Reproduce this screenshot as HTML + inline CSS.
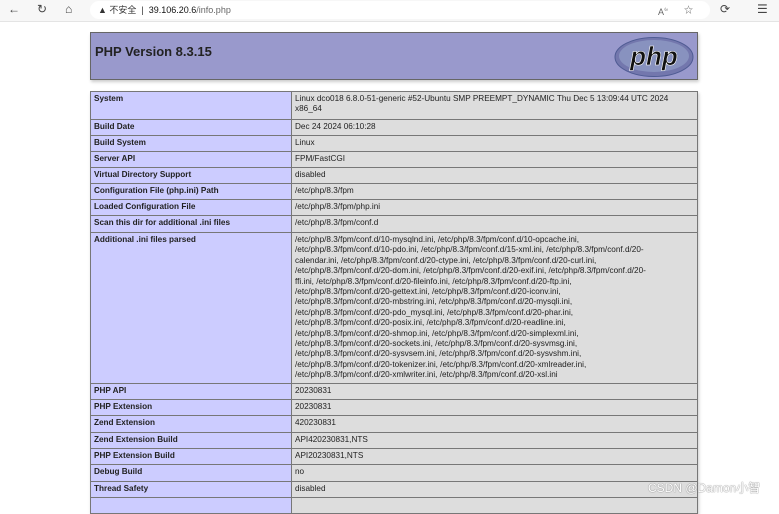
<!DOCTYPE html>
<html><head><meta charset="utf-8"><style>
body{margin:0;width:779px;height:500px;overflow:hidden;background:#fff;font-family:"Liberation Sans","Noto Sans CJK SC",sans-serif;position:relative}
.bar{position:absolute;left:0;top:0;width:779px;height:21px;background:#f7f7f7;border-bottom:1px solid #e4e4e4}
.url{position:absolute;left:90px;top:1px;width:620px;height:18px;background:#fff;border-radius:10px;font-size:9px;line-height:18px;color:#333}
.ic{position:absolute;top:2px;font-size:12px;color:#444}
.hd{position:absolute;left:90px;top:32px;width:606px;height:46px;background:#9999cc;border:1px solid #666;box-shadow:1px 2px 3px #ccc}
.hd h1{margin:0;position:absolute;left:4px;top:11px;font-size:13px;font-weight:bold;color:#222}
table{position:absolute;left:90px;top:91px;width:608px;border-collapse:collapse;box-shadow:1px 2px 3px #ccc}
td{border:1px solid #777;font-size:8.2px;line-height:10.4px;padding:2px 3px 2px 3px;vertical-align:top;color:#222}
td.e{background:#ccccff;font-weight:bold;width:194px}
td.v{background:#dddddd}
tr{height:16px}
.wm{position:absolute;left:648px;top:479px;font-size:12px;color:#fff;text-shadow:0 0 1px #888,0 0 1px #888}
</style></head><body>
<div class="bar">
<span class="ic" style="left:8px">←</span><span class="ic" style="left:37px">↻</span><span class="ic" style="left:65px">⌂</span>
<div class="url"><span style="margin-left:8px">▲ 不安全 &nbsp;|&nbsp; <b style="font-weight:normal;color:#111">39.106.20.6</b><span style="color:#666">/info.php</span></span>
<span style="position:absolute;left:568px;color:#666">A<sup style="font-size:6px">৬</sup></span><span style="position:absolute;left:594px;color:#666">☆</span></div>
<span class="ic" style="left:720px">⟳</span><span class="ic" style="left:757px">☰</span>
</div>
<div class="hd"><h1>PHP Version 8.3.15</h1>
<svg style="position:absolute;left:523px;top:4px" width="80" height="40"><ellipse cx="40" cy="20" rx="39" ry="19.5" fill="#7377ad" stroke="#4f5b93" stroke-width="1"/><ellipse cx="40" cy="19" rx="35" ry="16" fill="#8892bf"/><text x="40" y="28" text-anchor="middle" font-family="Liberation Sans" font-style="italic" font-weight="bold" font-size="26" fill="#111" stroke="#fff" stroke-width="0.6">php</text></svg>
</div>
<table>
<tr style="height:28px"><td class="e">System</td><td class="v">Linux dco018 6.8.0-51-generic #52-Ubuntu SMP PREEMPT_DYNAMIC Thu Dec 5 13:09:44 UTC 2024<br>x86_64</td></tr>
<tr><td class="e">Build Date</td><td class="v">Dec 24 2024 06:10:28</td></tr>
<tr><td class="e">Build System</td><td class="v">Linux</td></tr>
<tr><td class="e">Server API</td><td class="v">FPM/FastCGI</td></tr>
<tr><td class="e">Virtual Directory Support</td><td class="v">disabled</td></tr>
<tr><td class="e">Configuration File (php.ini) Path</td><td class="v">/etc/php/8.3/fpm</td></tr>
<tr><td class="e">Loaded Configuration File</td><td class="v">/etc/php/8.3/fpm/php.ini</td></tr>
<tr style="height:17px"><td class="e">Scan this dir for additional .ini files</td><td class="v">/etc/php/8.3/fpm/conf.d</td></tr>
<tr style="height:151px"><td class="e">Additional .ini files parsed</td><td class="v">/etc/php/8.3/fpm/conf.d/10-mysqlnd.ini, /etc/php/8.3/fpm/conf.d/10-opcache.ini,<br>/etc/php/8.3/fpm/conf.d/10-pdo.ini, /etc/php/8.3/fpm/conf.d/15-xml.ini, /etc/php/8.3/fpm/conf.d/20-<br>calendar.ini, /etc/php/8.3/fpm/conf.d/20-ctype.ini, /etc/php/8.3/fpm/conf.d/20-curl.ini,<br>/etc/php/8.3/fpm/conf.d/20-dom.ini, /etc/php/8.3/fpm/conf.d/20-exif.ini, /etc/php/8.3/fpm/conf.d/20-<br>ffi.ini, /etc/php/8.3/fpm/conf.d/20-fileinfo.ini, /etc/php/8.3/fpm/conf.d/20-ftp.ini,<br>/etc/php/8.3/fpm/conf.d/20-gettext.ini, /etc/php/8.3/fpm/conf.d/20-iconv.ini,<br>/etc/php/8.3/fpm/conf.d/20-mbstring.ini, /etc/php/8.3/fpm/conf.d/20-mysqli.ini,<br>/etc/php/8.3/fpm/conf.d/20-pdo_mysql.ini, /etc/php/8.3/fpm/conf.d/20-phar.ini,<br>/etc/php/8.3/fpm/conf.d/20-posix.ini, /etc/php/8.3/fpm/conf.d/20-readline.ini,<br>/etc/php/8.3/fpm/conf.d/20-shmop.ini, /etc/php/8.3/fpm/conf.d/20-simplexml.ini,<br>/etc/php/8.3/fpm/conf.d/20-sockets.ini, /etc/php/8.3/fpm/conf.d/20-sysvmsg.ini,<br>/etc/php/8.3/fpm/conf.d/20-sysvsem.ini, /etc/php/8.3/fpm/conf.d/20-sysvshm.ini,<br>/etc/php/8.3/fpm/conf.d/20-tokenizer.ini, /etc/php/8.3/fpm/conf.d/20-xmlreader.ini,<br>/etc/php/8.3/fpm/conf.d/20-xmlwriter.ini, /etc/php/8.3/fpm/conf.d/20-xsl.ini</td></tr>
<tr><td class="e">PHP API</td><td class="v">20230831</td></tr>
<tr><td class="e">PHP Extension</td><td class="v">20230831</td></tr>
<tr style="height:17px"><td class="e">Zend Extension</td><td class="v">420230831</td></tr>
<tr><td class="e">Zend Extension Build</td><td class="v">API420230831,NTS</td></tr>
<tr><td class="e">PHP Extension Build</td><td class="v">API20230831,NTS</td></tr>
<tr style="height:17px"><td class="e">Debug Build</td><td class="v">no</td></tr>
<tr><td class="e">Thread Safety</td><td class="v">disabled</td></tr>
<tr><td class="e">&nbsp;</td><td class="v">&nbsp;</td></tr>
</table>
<div class="wm">CSDN @Damon小智</div>
</body></html>
